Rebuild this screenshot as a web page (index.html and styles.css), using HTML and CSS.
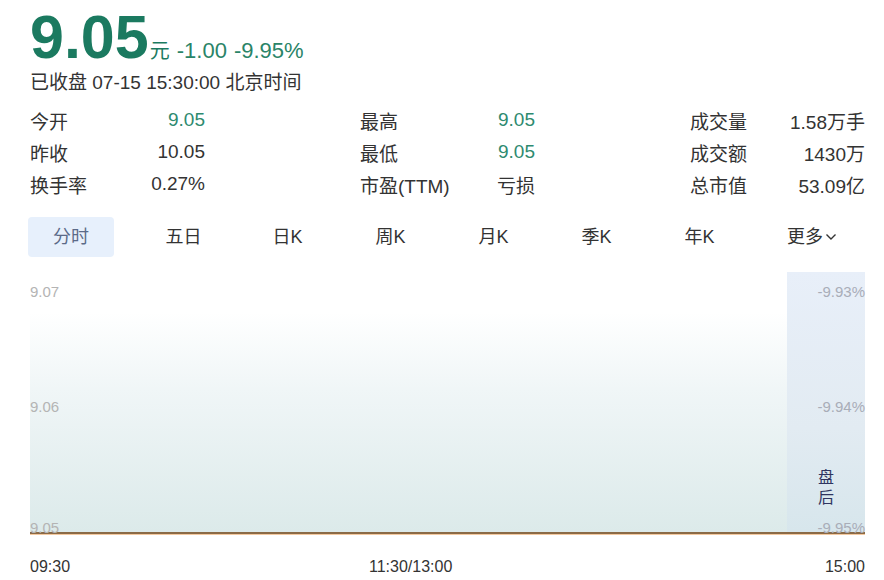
FILE: index.html
```html
<!DOCTYPE html>
<html lang="zh-CN">
<head>
  <meta charset="UTF-8" />
  <title>行情 9.05</title>
  <link rel="stylesheet" href="styles.css">
</head>
<body>
  <div class="quote">
    <div class="price-row">
      <span class="price">9.05</span>
      <span class="unit">元</span>
      <span class="change">-1.00</span>
      <span class="change">-9.95%</span>
    </div>
    <div class="status">已收盘 07-15 15:30:00 北京时间</div>
  </div>

  <div class="stats">
    <div class="stat"><span>今开</span><span class="down">9.05</span></div>
    <div class="stat"><span>最高</span><span class="down">9.05</span></div>
    <div class="stat"><span>成交量</span><span>1.58万手</span></div>
    <div class="stat"><span>昨收</span><span>10.05</span></div>
    <div class="stat"><span>最低</span><span class="down">9.05</span></div>
    <div class="stat"><span>成交额</span><span>1430万</span></div>
    <div class="stat"><span>换手率</span><span>0.27%</span></div>
    <div class="stat"><span>市盈(TTM)</span><span>亏损</span></div>
    <div class="stat"><span>总市值</span><span>53.09亿</span></div>
  </div>

  <ul class="tabs">
    <li class="active">分时</li>
    <li>五日</li>
    <li>日K</li>
    <li>周K</li>
    <li>月K</li>
    <li>季K</li>
    <li>年K</li>
    <li class="more">更多<svg width="12" height="8" viewBox="0 0 12 8"><path d="M1.5 1.5 L6 6 L10.5 1.5" fill="none" stroke="#333" stroke-width="1.4"/></svg></li>
  </ul>

  <div class="chart">
    <div class="area"></div>
    <div class="after">
      <span class="after-tag">盘<br>后</span>
    </div>
    <div class="base-line"></div>
    <span class="axis left" style="top: 12px">9.07</span>
    <span class="axis left" style="top: 127px">9.06</span>
    <span class="axis left" style="top: 248px">9.05</span>
    <span class="axis right" style="top: 12px">-9.93%</span>
    <span class="axis right" style="top: 127px">-9.94%</span>
    <span class="axis right" style="top: 248px">-9.95%</span>
  </div>

  <div class="times">
    <span class="t-open">09:30</span>
    <span>11:30/13:00</span>
    <span class="t-close">15:00</span>
  </div>
</body>
</html>
```

FILE: styles.css
```css
body {
  margin: 0;
  padding: 0 19px 0 30px;
  background: #fff;
  color: #333;
  font-family: "Liberation Sans", Arial, "Noto Sans CJK SC", sans-serif;
  font-size: 19px;
}
.quote {
  padding-top: 6px;
}
.price-row {
  display: flex;
  align-items: baseline;
  height: 62px;
  color: #1b7a60;
}
.price {
  font-size: 61px;
  font-weight: bold;
  line-height: 62px;
}
.unit {
  font-size: 20px;
  margin: 0 7px 0 1px;
  font-family: "Noto Sans CJK SC", sans-serif;
}
.change {
  font-size: 22px;
  margin-right: 7px;
  color: #2a8468;
}
.status {
  height: 28px;
  line-height: 30px;
}

/* three columns of label / value pairs */
.stats {
  display: grid;
  grid-template-columns: 330px 330px 175px;
  grid-auto-rows: 32px;
  margin-top: 8px;
}
.stat {
  display: flex;
  justify-content: space-between;
  align-items: center;
  width: 175px;
}
.stat .down {
  color: #2e8a70;
}

.tabs {
  list-style: none;
  margin: 17px 0 0 -2px;
  padding: 0;
  display: flex;
  height: 40px;
}
.tabs li {
  width: 103px;
  text-align: center;
  line-height: 40px;
  font-size: 18px;
}
.tabs li.active {
  width: 86px;
  margin-right: 17px;
  background: #e7f0fc;
  color: #5b6a88;
  border-radius: 4px;
}
.tabs li:nth-child(2) {
  width: 105px;
}
.tabs li.more {
  width: auto;
  margin-left: 36px;
  display: flex;
  align-items: center;
  gap: 2px;
}

.chart {
  position: relative;
  height: 268px;
  margin-top: 15px;
}
.area {
  position: absolute;
  left: 0;
  right: 78px;
  top: 40px;
  bottom: 8px;
  background: linear-gradient(to bottom, #ffffff 0%, #f0f6f7 35%, #dceaea 100%);
}
.after {
  position: absolute;
  right: 0;
  top: 0;
  width: 78px;
  bottom: 8px;
  background: linear-gradient(to bottom, #e8eff9 0%, #e2ebf2 60%, #d7e6ec 100%);
}
.after-tag {
  position: absolute;
  left: 0;
  right: 0;
  bottom: 26px;
  text-align: center;
  font-family: "Noto Sans CJK SC", sans-serif;
  font-size: 16px;
  line-height: 20px;
  color: #2f3560;
}
.base-line {
  position: absolute;
  left: 0;
  right: 0;
  bottom: 6px;
  height: 2px;
  background: #8b6a46;
  box-shadow: 0 1px 0 #f3c9a0;
}
.axis {
  position: absolute;
  font-size: 15px;
  line-height: 16px;
  color: #b4b4b4;
}
.axis.left {
  left: 0;
}
.axis.right {
  right: 0;
  color: #a9adb8;
}
.times {
  display: flex;
  height: 30px;
  margin-top: 12px;
  font-size: 16px;
  line-height: 30px;
}
.times .t-open {
  width: 339px;
}
.times .t-close {
  margin-left: auto;
}
```
